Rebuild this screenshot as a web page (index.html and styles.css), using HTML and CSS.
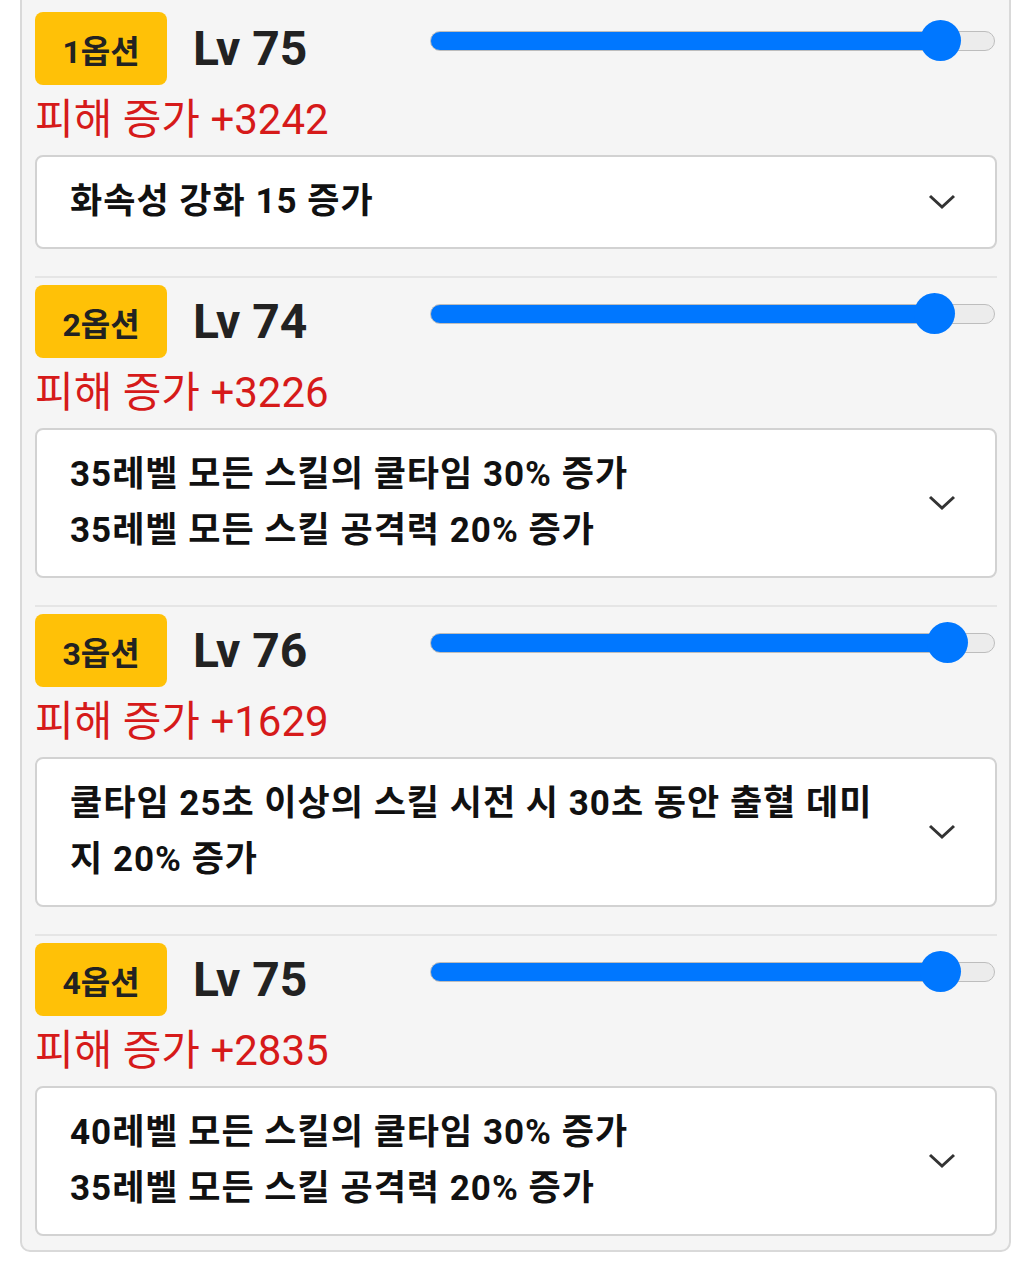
FILE: index.html
```html
<!DOCTYPE html>
<html lang="ko">
<head>
    <meta charset="UTF-8">
    <meta name="viewport" content="width=device-width, initial-scale=1.0">
    <title>옵션 레벨</title>
    <link rel="stylesheet" href="styles.css">
</head>
<body>

    <div class="container">

        <div class="option">
            <div class="option-head">
                <span class="badge">1옵션</span>
                <span class="level">Lv 75</span>
                <input class="slider" type="range" min="0" max="80" value="75" style="--v: 0.9375">
            </div>
            <p class="damage">피해 증가 +3242</p>
            <div class="select-box">
                <div class="select-text">화속성 강화 15 증가</div>
                <svg class="chevron" viewBox="0 0 28 16" width="28" height="16"><path d="M2 2 L14 13 L26 2" fill="none" stroke="#333" stroke-width="3"/></svg>
            </div>
        </div>

        <div class="option">
            <div class="option-head">
                <span class="badge">2옵션</span>
                <span class="level">Lv 74</span>
                <input class="slider" type="range" min="0" max="80" value="74" style="--v: 0.925">
            </div>
            <p class="damage">피해 증가 +3226</p>
            <div class="select-box">
                <div class="select-text">35레벨 모든 스킬의 쿨타임 30% 증가<br>35레벨 모든 스킬 공격력 20% 증가</div>
                <svg class="chevron" viewBox="0 0 28 16" width="28" height="16"><path d="M2 2 L14 13 L26 2" fill="none" stroke="#333" stroke-width="3"/></svg>
            </div>
        </div>

        <div class="option">
            <div class="option-head">
                <span class="badge">3옵션</span>
                <span class="level">Lv 76</span>
                <input class="slider" type="range" min="0" max="80" value="76" style="--v: 0.95">
            </div>
            <p class="damage">피해 증가 +1629</p>
            <div class="select-box">
                <div class="select-text">쿨타임 25초 이상의 스킬 시전 시 30초 동안 출혈 데미지 20% 증가</div>
                <svg class="chevron" viewBox="0 0 28 16" width="28" height="16"><path d="M2 2 L14 13 L26 2" fill="none" stroke="#333" stroke-width="3"/></svg>
            </div>
        </div>

        <div class="option">
            <div class="option-head">
                <span class="badge">4옵션</span>
                <span class="level">Lv 75</span>
                <input class="slider" type="range" min="0" max="80" value="75" style="--v: 0.9375">
            </div>
            <p class="damage">피해 증가 +2835</p>
            <div class="select-box">
                <div class="select-text">40레벨 모든 스킬의 쿨타임 30% 증가<br>35레벨 모든 스킬 공격력 20% 증가</div>
                <svg class="chevron" viewBox="0 0 28 16" width="28" height="16"><path d="M2 2 L14 13 L26 2" fill="none" stroke="#333" stroke-width="3"/></svg>
            </div>
        </div>

    </div>

</body>
</html>
```
FILE: styles.css
```css
body {
    font-family: Roboto, "Noto Sans CJK KR", sans-serif;
    margin: 0;
    padding: 0;
    background-color: #fff;
}
.container {
    width: 991px;
    margin: -20px 0 0 20px;
    padding: 30px 12px 14px 13px;
    box-sizing: border-box;
    background: #f5f5f5;
    border: 2px solid #d9d9d9;
    border-radius: 10px;
}
.option {
    padding: 7px 0 27px;
    border-bottom: 2px solid #e5e5e5;
}
.option:first-child {
    padding-top: 0;
}
.option:last-child {
    padding-bottom: 0;
    border-bottom: none;
}
.option-head {
    display: flex;
    align-items: center;
    height: 73px;
}
.badge {
    display: flex;
    align-items: center;
    justify-content: center;
    width: 132px;
    height: 73px;
    background-color: #ffc107;
    border-radius: 8px;
    font-size: 32px;
    font-weight: bold;
    color: #222;
}
.level {
    margin-left: 26px;
    font-size: 48px;
    font-weight: bold;
    color: #222;
}
.slider {
    -webkit-appearance: none;
    appearance: none;
    align-self: flex-start;
    width: 565px;
    height: 41px;
    margin: 8px 2px 0 auto;
    padding: 0;
    background: transparent;
}
.slider::-webkit-slider-runnable-track {
    height: 20px;
    border: 1px solid #bdbdbd;
    border-radius: 11px;
    background: linear-gradient(to right, #0077ff calc(20px + var(--v) * (100% - 40px)), #ececec 0);
}
.slider::-webkit-slider-thumb {
    -webkit-appearance: none;
    width: 41px;
    height: 41px;
    margin-top: -11.5px;
    border: none;
    border-radius: 50%;
    background: #0077ff;
}
.damage {
    margin: 6px 0 6px;
    font-size: 42px;
    line-height: 58px;
    color: #d61a1a;
}
.select-box {
    display: flex;
    align-items: center;
    padding: 17px 39px 17px 33px;
    background: #fff;
    border: 2px solid #d2d2d2;
    border-radius: 8px;
}
.select-text {
    flex: 1;
    margin-right: 36px;
    font-size: 35px;
    font-weight: bold;
    letter-spacing: 1px;
    line-height: 56px;
    color: #111;
}
.chevron {
    flex-shrink: 0;
}
```
